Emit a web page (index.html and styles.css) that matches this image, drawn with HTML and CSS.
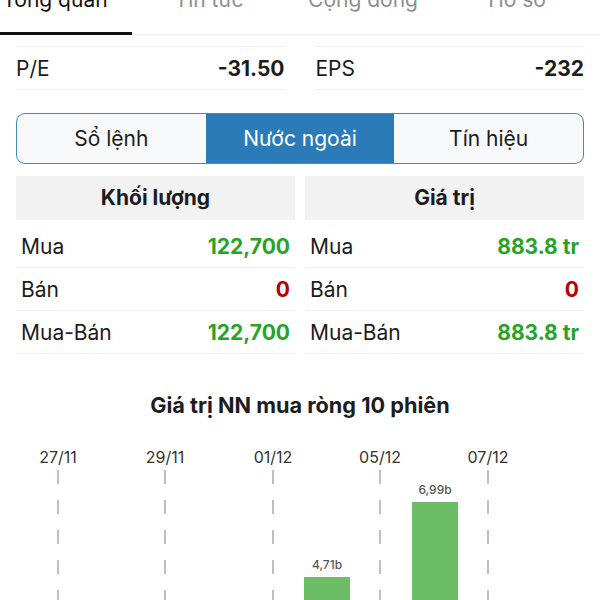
FILE: index.html
```html
<!DOCTYPE html>
<html lang="vi">
  <head>
    <meta charset="utf-8" />
    <title>Nước ngoài</title>
    <link rel="stylesheet" href="styles.css">
  </head>

  <body>
    <nav class="tabs">
      <div class="tab active">Tổng quan</div>
      <div class="tab">Tin tức</div>
      <div class="tab">Cộng đồng</div>
      <div class="tab">Hồ sơ</div>
    </nav>

    <div class="stats">
      <div class="stat">
        <span>P/E</span>
        <b>-31.50</b>
      </div>
      <div class="stat">
        <span>EPS</span>
        <b>-232</b>
      </div>
    </div>

    <div class="segments">
      <button class="segment">Sổ lệnh</button>
      <button class="segment selected">Nước ngoài</button>
      <button class="segment">Tín hiệu</button>
    </div>

    <div class="foreign">
      <div class="col">
        <div class="col-head">Khối lượng</div>
        <div class="row"><span>Mua</span><b class="up">122,700</b></div>
        <div class="row"><span>Bán</span><b class="down">0</b></div>
        <div class="row"><span>Mua-Bán</span><b class="up">122,700</b></div>
      </div>
      <div class="col">
        <div class="col-head">Giá trị</div>
        <div class="row"><span>Mua</span><b class="up">883.8 tr</b></div>
        <div class="row"><span>Bán</span><b class="down">0</b></div>
        <div class="row"><span>Mua-Bán</span><b class="up">883.8 tr</b></div>
      </div>
    </div>

    <h2 class="chart-title">Giá trị NN mua ròng 10 phiên</h2>

    <svg class="chart" width="600" height="170" viewBox="0 0 600 170">
      <g class="dates">
        <text x="58" y="23">27/11</text>
        <text x="165" y="23">29/11</text>
        <text x="273" y="23">01/12</text>
        <text x="380" y="23">05/12</text>
        <text x="488" y="23">07/12</text>
      </g>
      <g class="grid">
        <line x1="58" y1="30" x2="58" y2="170" />
        <line x1="165" y1="30" x2="165" y2="170" />
        <line x1="273" y1="30" x2="273" y2="170" />
        <line x1="380" y1="30" x2="380" y2="170" />
        <line x1="488" y1="30" x2="488" y2="170" />
      </g>
      <g class="bars">
        <rect x="304" y="137" width="46" height="60" />
        <rect x="412" y="62" width="46" height="120" />
      </g>
      <g class="bar-labels">
        <text x="327" y="129">4,71b</text>
        <text x="435" y="54">6,99b</text>
      </g>
    </svg>
  </body>
</html>
```

FILE: styles.css
```css
html {
  font-family: Inter, "Noto Sans", sans-serif;
  color: #1c1c1e;
}

body {
  margin: 0;
  overflow: hidden;
}

.tabs {
  display: flex;
  margin-top: -12px;
  margin-left: -22px;
  border-bottom: 1px solid #ececec;
}

.tab {
  width: 154px;
  flex-shrink: 0;
  font-size: 21px;
  line-height: 24px;
  padding-bottom: 20px;
  text-align: center;
  color: #8e8e93;
  border-bottom: 3px solid transparent;
  margin-bottom: -1px;
}

.tab.active {
  color: #111;
  border-bottom-color: #111;
}

.stats {
  display: grid;
  grid-template-columns: 1fr 1fr;
  column-gap: 31px;
  margin: 11px 16px 0;
}

.stat {
  display: flex;
  justify-content: space-between;
  align-items: center;
  height: 42px;
  border-top: 1px solid #efefef;
  border-bottom: 1px solid #efefef;
  font-size: 21px;
}

.stat b {
  font-weight: 700;
}

.segments {
  display: flex;
  margin: 23px 16px 0;
  height: 51px;
  box-sizing: border-box;
  border: 1.5px solid #4a86b7;
  border-radius: 9px;
  overflow: hidden;
  background: #f7f8f9;
}

.segment {
  flex: 1;
  border: 0;
  margin: 0;
  padding: 0;
  background: none;
  font-family: inherit;
  font-size: 21px;
  color: #1c1c1e;
}

.segment.selected {
  background: #2a7bb8;
  color: #fff;
}

.foreign {
  display: grid;
  grid-template-columns: 1fr 1fr;
  column-gap: 10px;
  margin: 12px 16px 0;
}

.col-head {
  height: 44px;
  line-height: 44px;
  background: #f2f2f3;
  text-align: center;
  font-size: 21px;
  font-weight: 700;
  margin-bottom: 5px;
}

.row {
  display: flex;
  justify-content: space-between;
  align-items: center;
  height: 42px;
  padding: 0 5px;
  border-bottom: 1px solid #efefef;
  font-size: 21px;
}

.row b {
  font-weight: 700;
}

.up {
  color: #27a427;
}

.down {
  color: #b40000;
}

.chart-title {
  margin: 37px 0 0;
  font-size: 21.7px;
  line-height: 28px;
  font-weight: 700;
  text-align: center;
}

.chart {
  display: block;
  margin-top: 21px;
}

.dates text {
  font-size: 16px;
  fill: #333;
  text-anchor: middle;
}

.grid line {
  stroke: #aaa;
  stroke-width: 1.5;
  stroke-dasharray: 14 16;
}

.bars rect {
  fill: #6cbd66;
}

.bar-labels text {
  font-size: 12px;
  font-weight: 500;
  fill: #555;
  text-anchor: middle;
}
```
